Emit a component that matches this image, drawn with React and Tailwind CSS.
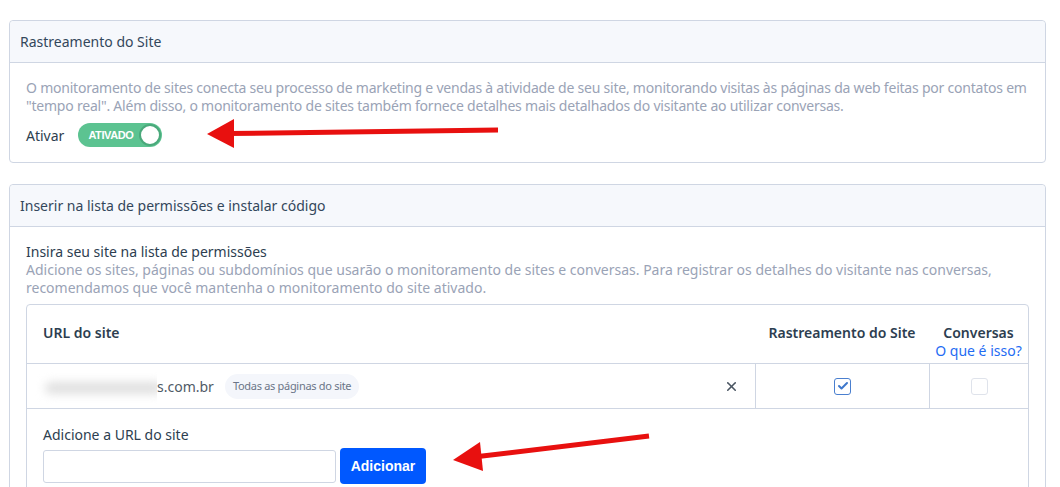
import { X, Check } from "lucide-react";

function Toggle() {
  return (
    <div className="flex items-center h-[24px] w-[84px] rounded-full bg-[#5cc391] pl-[10px] pr-[1px]">
      <span className="flex-1 text-[11px] font-bold text-white tracking-[-0.4px] font-['Liberation_Sans',sans-serif]">
        ATIVADO
      </span>
      <span className="h-[22px] w-[22px] rounded-full bg-white border-[2px] border-[#4aa97b]" />
    </div>
  );
}

function Checkbox({ checked }) {
  return checked ? (
    <span className="flex h-[17px] w-[17px] items-center justify-center rounded-[3px] border-[1.5px] border-[#4a7fcf] bg-white">
      <Check size={12} strokeWidth={4} className="text-[#3f78cc]" />
    </span>
  ) : (
    <span className="h-[17px] w-[17px] rounded-[3px] border border-[#dfe3eb] bg-white" />
  );
}

function Arrows() {
  return (
    <svg className="pointer-events-none absolute left-0 top-0" width="1060" height="487">
      <line x1="498" y1="130" x2="228" y2="133.5" stroke="#e8100f" strokeWidth="5" />
      <polygon points="207,134 234,119 234,148" fill="#e8100f" />
      <line x1="649" y1="436" x2="474" y2="457" stroke="#e8100f" strokeWidth="5" />
      <polygon points="453,460 480,442 483,471" fill="#e8100f" />
    </svg>
  );
}

export default function App() {
  return (
    <div className="relative h-[487px] w-[1060px] overflow-hidden bg-white font-['Noto_Sans',sans-serif] text-[14px] text-[#33475b]">
      <div className="ml-[9px] mt-[20px] w-[1037px]">
        {/* Rastreamento */}
        <div className="rounded-[4px] border border-[#cfd6e3] bg-white">
          <div className="flex h-[42px] items-center border-b border-[#cfd6e3] bg-[#f6f8fc] px-[10px] rounded-t-[4px]">
            Rastreamento do Site
          </div>
          <div className="px-[16px] pt-[16px] pb-[15px]">
            <p className="leading-[18px] tracking-[-0.22px] text-[#9aa3b6]">
              O monitoramento de sites conecta seu processo de marketing e vendas à atividade de seu site, monitorando visitas às páginas da web feitas por contatos em "tempo real". Além disso, o monitoramento de sites também fornece detalhes mais detalhados do visitante ao utilizar conversas.
            </p>
            <div className="mt-[8px] flex items-center gap-[14px]">
              <span className="text-[#2d3e50]">Ativar</span>
              <Toggle />
            </div>
          </div>
        </div>

        {/* Permissões */}
        <div className="mt-[21px] rounded-[4px] border border-[#cfd6e3] bg-white">
          <div className="flex h-[42px] items-center border-b border-[#cfd6e3] bg-[#f6f8fc] px-[10px] rounded-t-[4px]">
            Inserir na lista de permissões e instalar código
          </div>
          <div className="px-[16px] pt-[16px]">
            <div className="leading-[18px] text-[#2d3e50]">Insira seu site na lista de permissões</div>
            <p className="leading-[18px] text-[#9aa3b6]">
              Adicione os sites, páginas ou subdomínios que usarão o monitoramento de sites e conversas. Para registrar os detalhes do visitante nas conversas, recomendamos que você mantenha o monitoramento do site ativado.
            </p>

            <div className="mt-[7px] rounded-t-[4px] border border-[#cfd6e3] h-[200px]">
              {/* header */}
              <div className="flex h-[59px] border-b border-[#cfd6e3] leading-[18px]">
                <div className="flex-1 pl-[16px] pt-[19px] font-semibold text-[#2d3e50]">URL do site</div>
                <div className="w-[174px] pt-[19px] text-center font-semibold text-[#2d3e50]">Rastreamento do Site</div>
                <div className="w-[99px] pt-[19px] text-center">
                  <div className="font-semibold text-[#2d3e50]">Conversas</div>
                  <div className="text-[#1f6cf3]">O que é isso?</div>
                </div>
              </div>
              {/* row */}
              <div className="flex h-[45px] border-b border-[#cfd6e3]">
                <div className="flex flex-1 items-center pl-[6px] pr-[16px]">
                  <div className="relative h-[35px] w-[124px] overflow-hidden bg-white">
                    <div className="absolute left-[12px] right-[-6px] top-[13px] h-[12px] rounded-full bg-[#e0e0e0] blur-[5px]" />
                  </div>
                  <span className="text-[#505a66]">s.com.br</span>
                  <span className="ml-[11px] flex h-[25px] items-center rounded-full bg-[#f4f6fb] px-[8px] text-[11px] tracking-[-0.3px] text-[#6b7588]">
                    Todas as páginas do site
                  </span>
                  <span className="flex-1" />
                  <X size={15} strokeWidth={2.5} className="text-[#4a5562]" />
                </div>
                <div className="flex w-[174px] items-center justify-center border-l border-[#cfd6e3]">
                  <Checkbox checked />
                </div>
                <div className="flex w-[99px] items-center justify-center border-l border-[#cfd6e3]">
                  <Checkbox />
                </div>
              </div>
              {/* add url */}
              <div className="pl-[16px] pt-[17px]">
                <div className="leading-[18px] text-[#2d3e50]">Adicione a URL do site</div>
                <div className="mt-[4px] flex items-center gap-[4px]">
                  <input className="h-[33px] w-[293px] rounded-[3px] border border-[#cfd6e3] bg-white px-2 outline-none" />
                  <button className="h-[36px] w-[86px] rounded-[4px] bg-[#0058ff] text-[14px] font-bold text-white font-['Liberation_Sans',sans-serif]">
                    Adicionar
                  </button>
                </div>
              </div>
            </div>
          </div>
        </div>
      </div>
      <Arrows />
    </div>
  );
}
